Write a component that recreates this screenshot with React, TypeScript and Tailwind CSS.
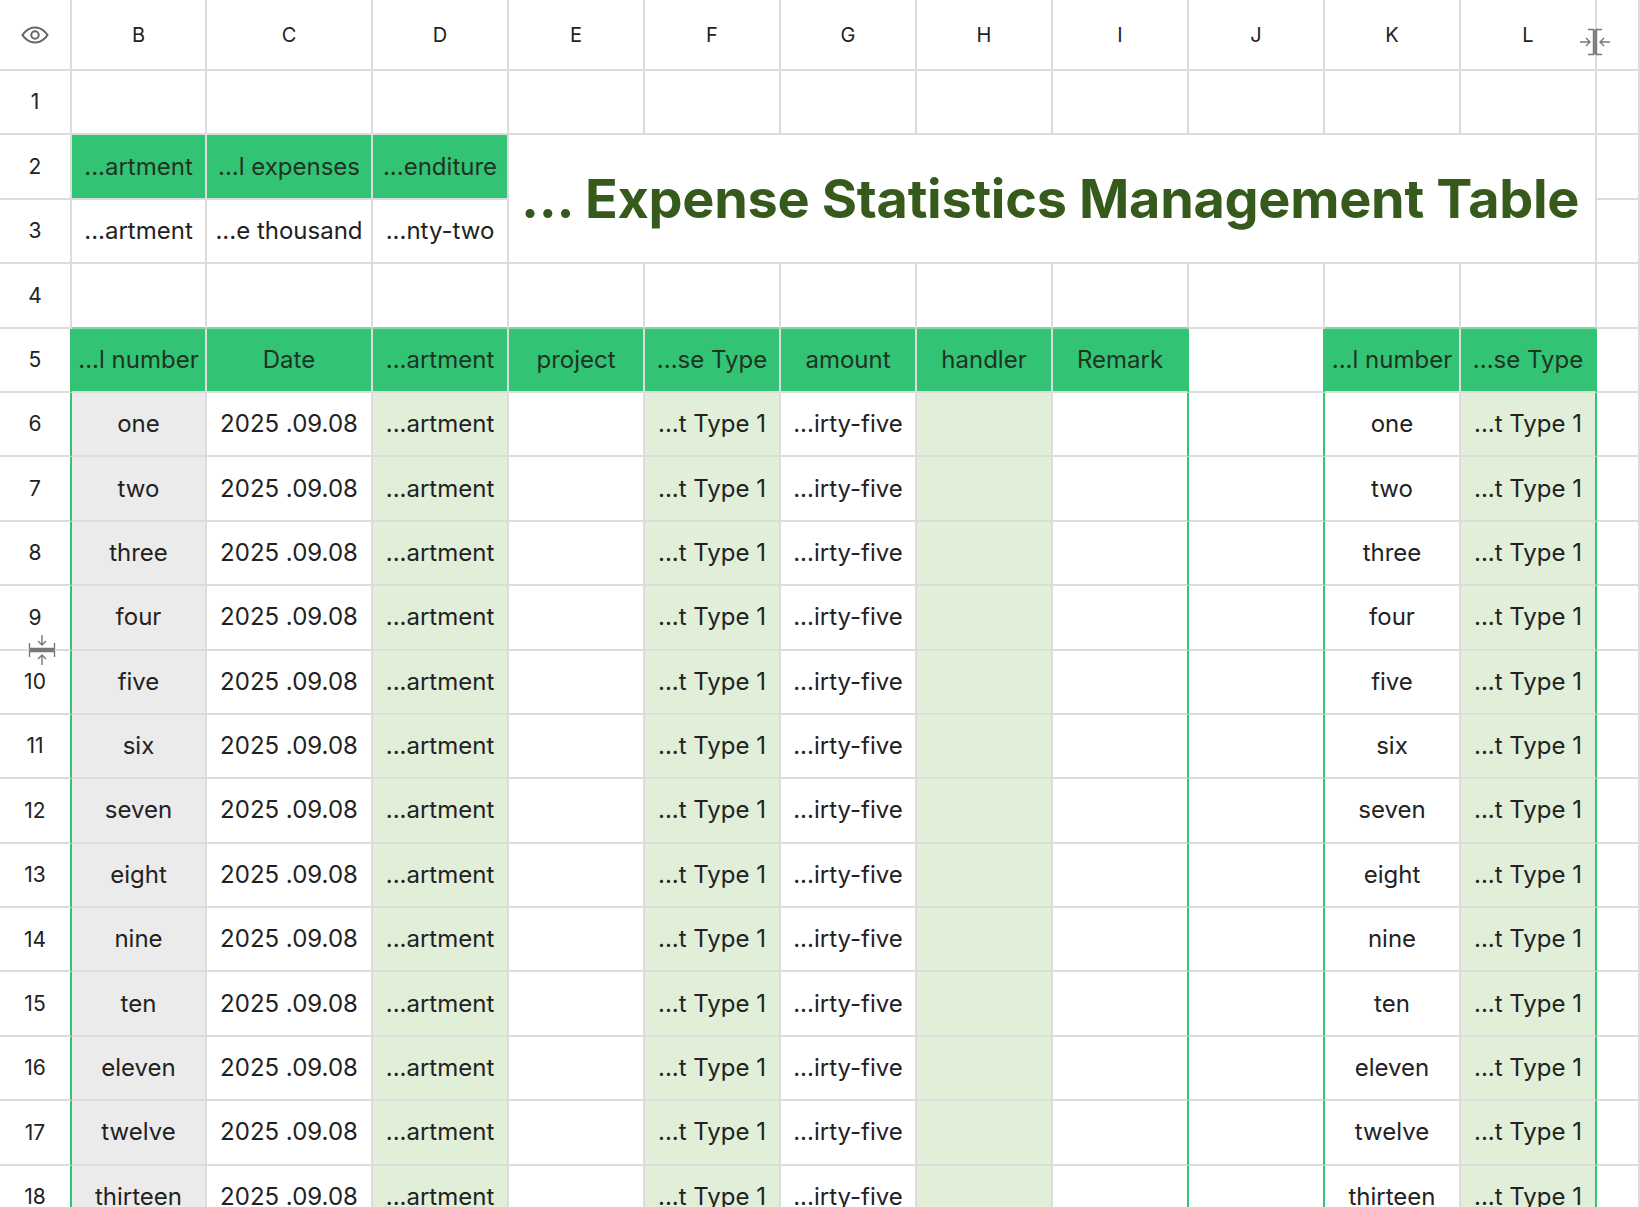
import React from "react";

const G = "bg-[#32c474]";
const LG = "bg-[#e1eed8]";
const GR = "bg-[#ebebeb]";
const cols = ["B", "C", "D", "E", "F", "G", "H", "I", "J", "K", "L", ""];
const nums = ["one","two","three","four","five","six","seven","eight","nine","ten","eleven","twelve","thirteen"];

type C = { t?: string; bg?: string; g?: boolean };

function rowCells(r: number): C[] {
  const e: C[] = Array.from({ length: 12 }, () => ({}));
  if (r === 2) {
    return [{ t: "...artment", bg: G, g: true }, { t: "...l expenses", bg: G, g: true }, { t: "...enditure", bg: G, g: true }, {}];
  }
  if (r === 3) {
    return [{ t: "...artment" }, { t: "...e thousand" }, { t: "...nty-two" }, {}];
  }
  if (r === 5) {
    return [
      { t: "...l number", bg: G, g: true }, { t: "Date", bg: G, g: true }, { t: "...artment", bg: G, g: true },
      { t: "project", bg: G, g: true }, { t: "...se Type", bg: G, g: true }, { t: "amount", bg: G, g: true },
      { t: "handler", bg: G, g: true }, { t: "Remark", bg: G, g: true }, {},
      { t: "...l number", bg: G, g: true }, { t: "...se Type", bg: G, g: true }, {},
    ];
  }
  if (r >= 6) {
    const n = nums[r - 6];
    return [
      { t: n, bg: GR }, { t: "2025 .09.08" }, { t: "...artment", bg: LG }, {},
      { t: "...t Type 1", bg: LG }, { t: "...irty-five" }, { bg: LG }, {}, {},
      { t: n }, { t: "...t Type 1", bg: LG }, {},
    ];
  }
  return e;
}

export default function App() {
  const rows = Array.from({ length: 18 }, (_, i) => i + 1);
  return (
    <div className="relative w-[1640px] h-[1207px] overflow-hidden bg-white text-[#222]" style={{ fontFamily: "Inter, 'Noto Sans', sans-serif" }}>
      <div className="grid grid-cols-[72px_135px_166px_136px_136px_136px_136px_136px_136px_136px_136px_136px_1fr] grid-rows-[71px_repeat(18,64.4px)]">
        <div className="flex items-center justify-center border-r-2 border-b-2 border-[#dcdcdc]">
          <svg width="30" height="30" viewBox="0 0 24 24" fill="none" stroke="#666" strokeWidth="1.6">
            <path d="M2 12s3.6-6 10-6 10 6 10 6-3.6 6-10 6S2 12 2 12z" />
            <circle cx="12" cy="12" r="3" />
          </svg>
        </div>
        {cols.map((c, i) => (
          <div key={i} className="flex items-center justify-center border-r-2 border-b-2 border-[#dcdcdc] text-[20px]">{c}</div>
        ))}
        <div className="col-start-5 col-end-13 row-start-3 row-end-5 flex items-center pl-[12px] border-r-2 border-b-2 border-[#dcdcdc] text-[54px] font-bold text-[#365a1c] whitespace-nowrap tracking-[-0.3px]">
          ... Expense Statistics Management Table
        </div>
        {rows.map((r) => {
          const cells = rowCells(r);
          return (
            <React.Fragment key={r}>
              <div className={`flex items-center justify-center border-b-2 border-[#dcdcdc] text-[21px] ${r >= 5 ? "border-r-2 border-r-[#32c474]" : "border-r-2"}`}>{r}</div>
              {cells.map((c, i) => {
                const greenR = r >= 5 && (i === 7 || i === 8 || i === 10);
                const greenB = r === 4 && (i <= 7 || i === 9 || i === 10);
                return (
                  <div
                    key={i}
                    className={`flex items-center justify-center whitespace-nowrap overflow-hidden text-[24px] border-r-2 border-b-2 border-[#dcdcdc] ${c.bg ?? ""} ${c.g ? "text-[#1f3325]" : ""} ${greenR ? "border-r-[#32c474]" : ""} ${greenB ? "border-b-[#7fd9a4]" : ""} ${c.g ? "border-[#2fb66b]" : ""}`}
                  >
                    {c.t}
                  </div>
                );
              })}
            </React.Fragment>
          );
        })}
      </div>
      <svg className="absolute left-[1579px] top-[28px]" width="32" height="28" viewBox="0 0 32 28" fill="none" stroke="#777" strokeWidth="1.4">
        <path d="M1 14h10M7 10l4 4-4 4M9 1.5h5.5v25H9M16 1.5v25M23 1.5h-5.5v25H23M31 14H21M25 10l-4 4 4 4" />
      </svg>
      <svg className="absolute left-[28px] top-[634px]" width="28" height="32" viewBox="0 0 28 32" fill="none" stroke="#777" strokeWidth="1.4">
        <path d="M14 1v10M10 7l4 4 4-4M1.5 9v5.5h25V9M1.5 16h25M1.5 23v-5.5h25V23M14 31V21M10 25l4-4 4 4" />
      </svg>
    </div>
  );
}
